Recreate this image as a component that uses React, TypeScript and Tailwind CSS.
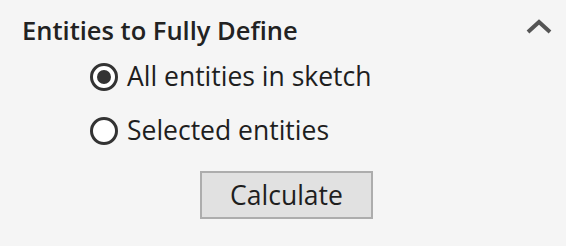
import React, { useState } from 'react';

const options = ['All entities in sketch', 'Selected entities'];

const Radio: React.FC<{ checked: boolean }> = ({ checked }) => (
  <span className="flex h-[28px] w-[28px] shrink-0 items-center justify-center rounded-full border-[3px] border-[#333] bg-white">
    {checked && <span className="h-[14px] w-[14px] rounded-full bg-[#333]" />}
  </span>
);

const App: React.FC = () => {
  const [selected, setSelected] = useState(0);
  return (
    <div
      className="h-[246px] w-[566px] bg-[#f5f5f5] text-[#1e1e1e]"
      style={{ fontFamily: '"Open Sans", "Noto Sans", sans-serif' }}
    >
      <div className="flex items-center justify-between pl-[22px] pr-[13px] pt-[13px]">
        <h2 className="text-[25.5px] font-semibold leading-[34px] text-[#222]">Entities to Fully Define</h2>
        <svg width="28" height="16" viewBox="0 0 28 16" fill="none" className="-mt-[6px]">
          <path d="M3 13 L14 3 L25 13" stroke="#555" strokeWidth="4" strokeLinejoin="miter" />
        </svg>
      </div>
      <div className="mt-[15px] flex flex-col gap-[25px] pl-[90px]">
        {options.map((label, i) => (
          <label key={label} className="flex cursor-pointer items-center gap-[9px]" onClick={() => setSelected(i)}>
            <Radio checked={selected === i} />
            <span className="text-[26.5px] leading-[29px]">{label}</span>
          </label>
        ))}
      </div>
      <div className="mt-[26px] pl-[200px]">
        <button className="h-[48px] w-[173px] border-2 border-[#adadad] bg-[#e1e1e1] text-[26.5px] leading-none">
          Calculate
        </button>
      </div>
    </div>
  );
};

export default App;
